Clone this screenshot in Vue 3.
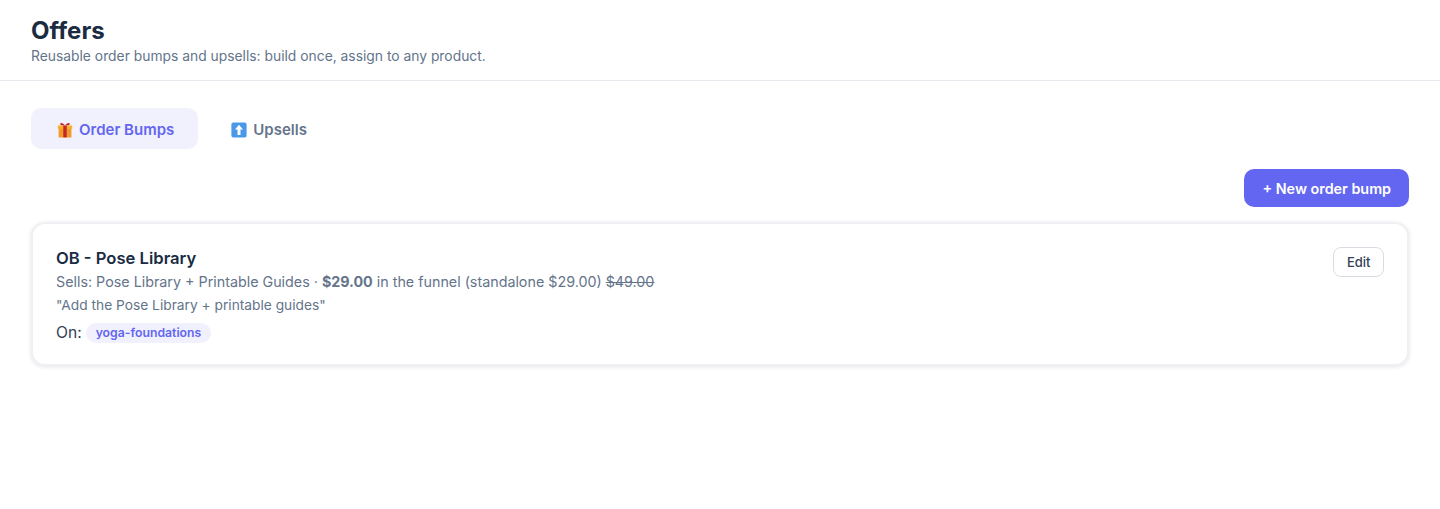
<template>
  <div class="page">
    <header class="page-header">
      <h1>Offers</h1>
      <p>Reusable order bumps and upsells: build once, assign to any product.</p>
    </header>

    <main class="content">
      <div class="tabs">
        <button class="tab active">
          <svg class="tab-icon" viewBox="0 0 16 16">
            <path d="M8 3.600C6.500.6 3.400.2 3.200 1.800 3 3.300 5.500 3.600 8 3.600c2.500 0 5-.3 4.800-1.800C12.600.2 9.500.6 8 3.600Z" fill="#c2272d" />
            <rect x=".8" y="3.600" width="14.400" height="3.400" rx=".4" fill="#f7ae2d" />
            <rect x="1.600" y="7" width="12.800" height="8.400" rx=".5" fill="#f09a2a" />
            <rect x="6.300" y="3.600" width="3.400" height="11.800" fill="#c2272d" />
          </svg>
          Order Bumps
        </button>
        <button class="tab">
          <svg class="tab-icon" viewBox="0 0 16 16">
            <rect x=".4" y=".4" width="15.200" height="15.200" rx="2" fill="#4a98e8" />
            <path d="M8 2.800 12 7.500H9.500V13h-3V7.500H4Z" fill="#fff" />
          </svg>
          Upsells
        </button>
      </div>

      <div class="toolbar">
        <button class="primary">+ New order bump</button>
      </div>

      <div v-for="bump in bumps" :key="bump.id" class="card">
        <div class="card-body">
          <h3>{{ bump.name }}</h3>
          <p class="meta">
            Sells: {{ bump.sells }} · <strong>{{ bump.price }}</strong> in the funnel (standalone {{ bump.standalone }})
            <s>{{ bump.compareAt }}</s>
          </p>
          <p class="meta quote">"{{ bump.headline }}"</p>
          <div class="on">
            On:
            <span v-for="slug in bump.products" :key="slug" class="pill">{{ slug }}</span>
          </div>
        </div>
        <button class="edit">Edit</button>
      </div>
    </main>
  </div>
</template>

<script setup>
import { ref } from 'vue';

const bumps = ref([
  {
    id: 1,
    name: 'OB - Pose Library',
    sells: 'Pose Library + Printable Guides',
    price: '$29.00',
    standalone: '$29.00',
    compareAt: '$49.00',
    headline: 'Add the Pose Library + printable guides',
    products: ['yoga-foundations']
  }
]);
</script>

<style>
html,
body {
  background: #fff;
}
</style>

<style scoped>
.page {
  min-height: 509px;
  font-family: Inter, "Liberation Sans", sans-serif;
  color: #1e293b;
}

.page-header {
  padding: 16px 31px 14px;
  border-bottom: 1px solid #e7e9ee;
}

h1 {
  margin: 0;
  font-size: 24px;
  line-height: 29px;
  font-weight: 700;
  color: #1a2b42;
}

.page-header p {
  margin: 1px 0 0;
  font-size: 13.85px;
  line-height: 20px;
  color: #64748b;
}

.content {
  padding: 27px 31px;
}

.tabs {
  display: flex;
  gap: 7px;
}

.tab {
  display: flex;
  align-items: center;
  gap: 6px;
  height: 41px;
  padding: 2px 24px 0 26px;
  border: 0;
  border-radius: 10px;
  background: transparent;
  font: 600 15px Inter, "Liberation Sans", sans-serif;
  color: #64748b;
}

.tab.active {
  background: #f1f1fd;
  color: #6366f1;
}

.tab-icon {
  width: 16px;
  height: 16px;
}

.toolbar {
  display: flex;
  justify-content: flex-end;
  margin-top: 20px;
}

.primary {
  height: 38px;
  padding: 0 18px;
  border: 0;
  border-radius: 10px;
  background: #6366f1;
  color: #fff;
  font: 600 14.35px Inter, "Liberation Sans", sans-serif;
}

.card {
  display: flex;
  justify-content: space-between;
  align-items: flex-start;
  margin-top: 15px;
  padding: 23px 23px 21px;
  border: 2px solid #eef0f3;
  border-radius: 14px;
  background: #fff;
  box-shadow: 0 1px 4px rgba(15, 23, 42, 0.12);
}

h3 {
  margin: 0;
  font-size: 16.6px;
  line-height: 22px;
  font-weight: 600;
  color: #1a2b42;
}

.meta {
  margin: 2px 0 0;
  font-size: 14.3px;
  line-height: 21px;
  color: #64748b;
}

.quote {
  margin-top: 3px;
  font-size: 13.76px;
}

.on {
  display: flex;
  align-items: center;
  gap: 4px;
  margin-top: 7px;
  font-size: 15.6px;
  line-height: 20px;
  color: #334155;
}

.pill {
  padding: 2px 10px;
  border-radius: 999px;
  background: #f1f1fd;
  color: #6366f1;
  font-size: 12.25px;
  line-height: 16px;
  font-weight: 600;
}

.edit {
  height: 30px;
  padding: 0 12.5px;
  border: 1px solid #d9dde3;
  border-radius: 8px;
  background: #fff;
  color: #334155;
  font: 500 13px Inter, "Liberation Sans", sans-serif;
}
</style>
